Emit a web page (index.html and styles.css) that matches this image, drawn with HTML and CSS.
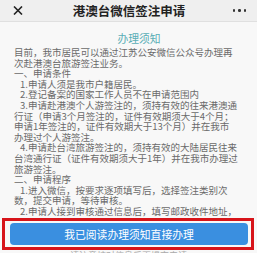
FILE: index.html
```html
<!DOCTYPE html>
<html lang="zh-CN">
<head>
<meta charset="utf-8">
<link rel="stylesheet" href="styles.css">
</head>
<body>
<div class="page">
  <header class="header">
    <svg class="close" width="10" height="9" viewBox="0 0 10 9"><path d="M1 0.5 L9 8.5 M9 0.5 L1 8.5" stroke="#222" stroke-width="1.6" fill="none"/></svg>
    <div class="title">港澳台微信签注申请</div>
    <div class="more"><span></span><span></span><span></span></div>
  </header>
  <main class="content">
    <div class="notice-title">办理须知</div>
    <div class="text">
      <div class="line">目前，我市居民可以通过江苏公安微信公众号办理再</div>
      <div class="line">次赴港澳台旅游签注业务。</div>
      <div class="line">一、申请条件</div>
      <div class="line ind">1.申请人须是我市户籍居民。</div>
      <div class="line ind">2.登记备案的国家工作人员不在申请范围内</div>
      <div class="line ind">3.申请赴港澳个人游签注的，须持有效的往来港澳通</div>
      <div class="line">行证（申请3个月签注的，证件有效期须大于4个月；</div>
      <div class="line">申请1年签注的，证件有效期大于13个月）并在我市</div>
      <div class="line">办理过个人游签注。</div>
      <div class="line ind">4.申请赴台湾旅游签注的，须持有效的大陆居民往来</div>
      <div class="line">台湾通行证（证件有效期须大于1年）并在我市办理过</div>
      <div class="line">旅游签注。</div>
      <div class="line">二、申请程序</div>
      <div class="line ind">1.进入微信，按要求逐项填写后，选择签注类别次</div>
      <div class="line">数，提交申请，等待审核。</div>
      <div class="line ind">2.申请人接到审核通过信息后，填写邮政收件地址，</div>
    </div>
  </main>
  <div class="highlight">
    <div class="btn">我已阅读办理须知直接办理</div>
  </div>
  <div class="foot">请注意核对信息后再提交申请</div>
</div>
</body>
</html>
```
FILE: styles.css
```css
html, body {
  margin: 0;
  padding: 0;
}
body {
  background: #f8f8f8;
  font-family: "Noto Sans CJK SC", "Noto Sans", sans-serif;
  width: 257px;
  height: 253px;
  overflow: hidden;
}
.page {
  display: flex;
  flex-direction: column;
}
.header {
  height: 21px;
  background: #efefef;
  border-bottom: 1px solid #e0e0e0;
  display: flex;
  align-items: center;
  justify-content: space-between;
  padding: 0 11px 0 13px;
}
.close {
  display: block;
}
.title {
  font-size: 12.5px;
  font-weight: bold;
  color: #222;
  line-height: 14px;
  margin-left: 2px;
}
.more {
  display: flex;
  gap: 3px;
  width: 13px;
}
.more span {
  width: 2.4px;
  height: 2.4px;
  border-radius: 50%;
  background: #333;
}
.content {
  padding: 0 8px 0 14px;
}
.notice-title {
  margin-top: 9px;
  text-align: center;
  font-size: 10.8px;
  line-height: 14px;
  color: #5aaeb6;
  margin-left: -8px;
  margin-right: -8px;
  padding-left: 15px;
}
.text {
  margin-top: 2px;
  color: #6a6a6a;
  font-size: 9.5px;
  line-height: 10.6px;
}
.line {
  white-space: nowrap;
}
.ind {
  padding-left: 6px;
}
.highlight {
  margin: 1px 3px 0 2px;
  border: 3px solid #d7141a;
  padding: 2px 3px 2px 5px;
}
.btn {
  height: 22px;
  background: #3a8fe0;
  border-radius: 4px;
  color: #fff;
  font-size: 10.8px;
  line-height: 22px;
  text-align: center;
}
.foot {
  margin-top: 1px;
  text-align: center;
  font-size: 9px;
  line-height: 10px;
  color: #aaa;
}
```
